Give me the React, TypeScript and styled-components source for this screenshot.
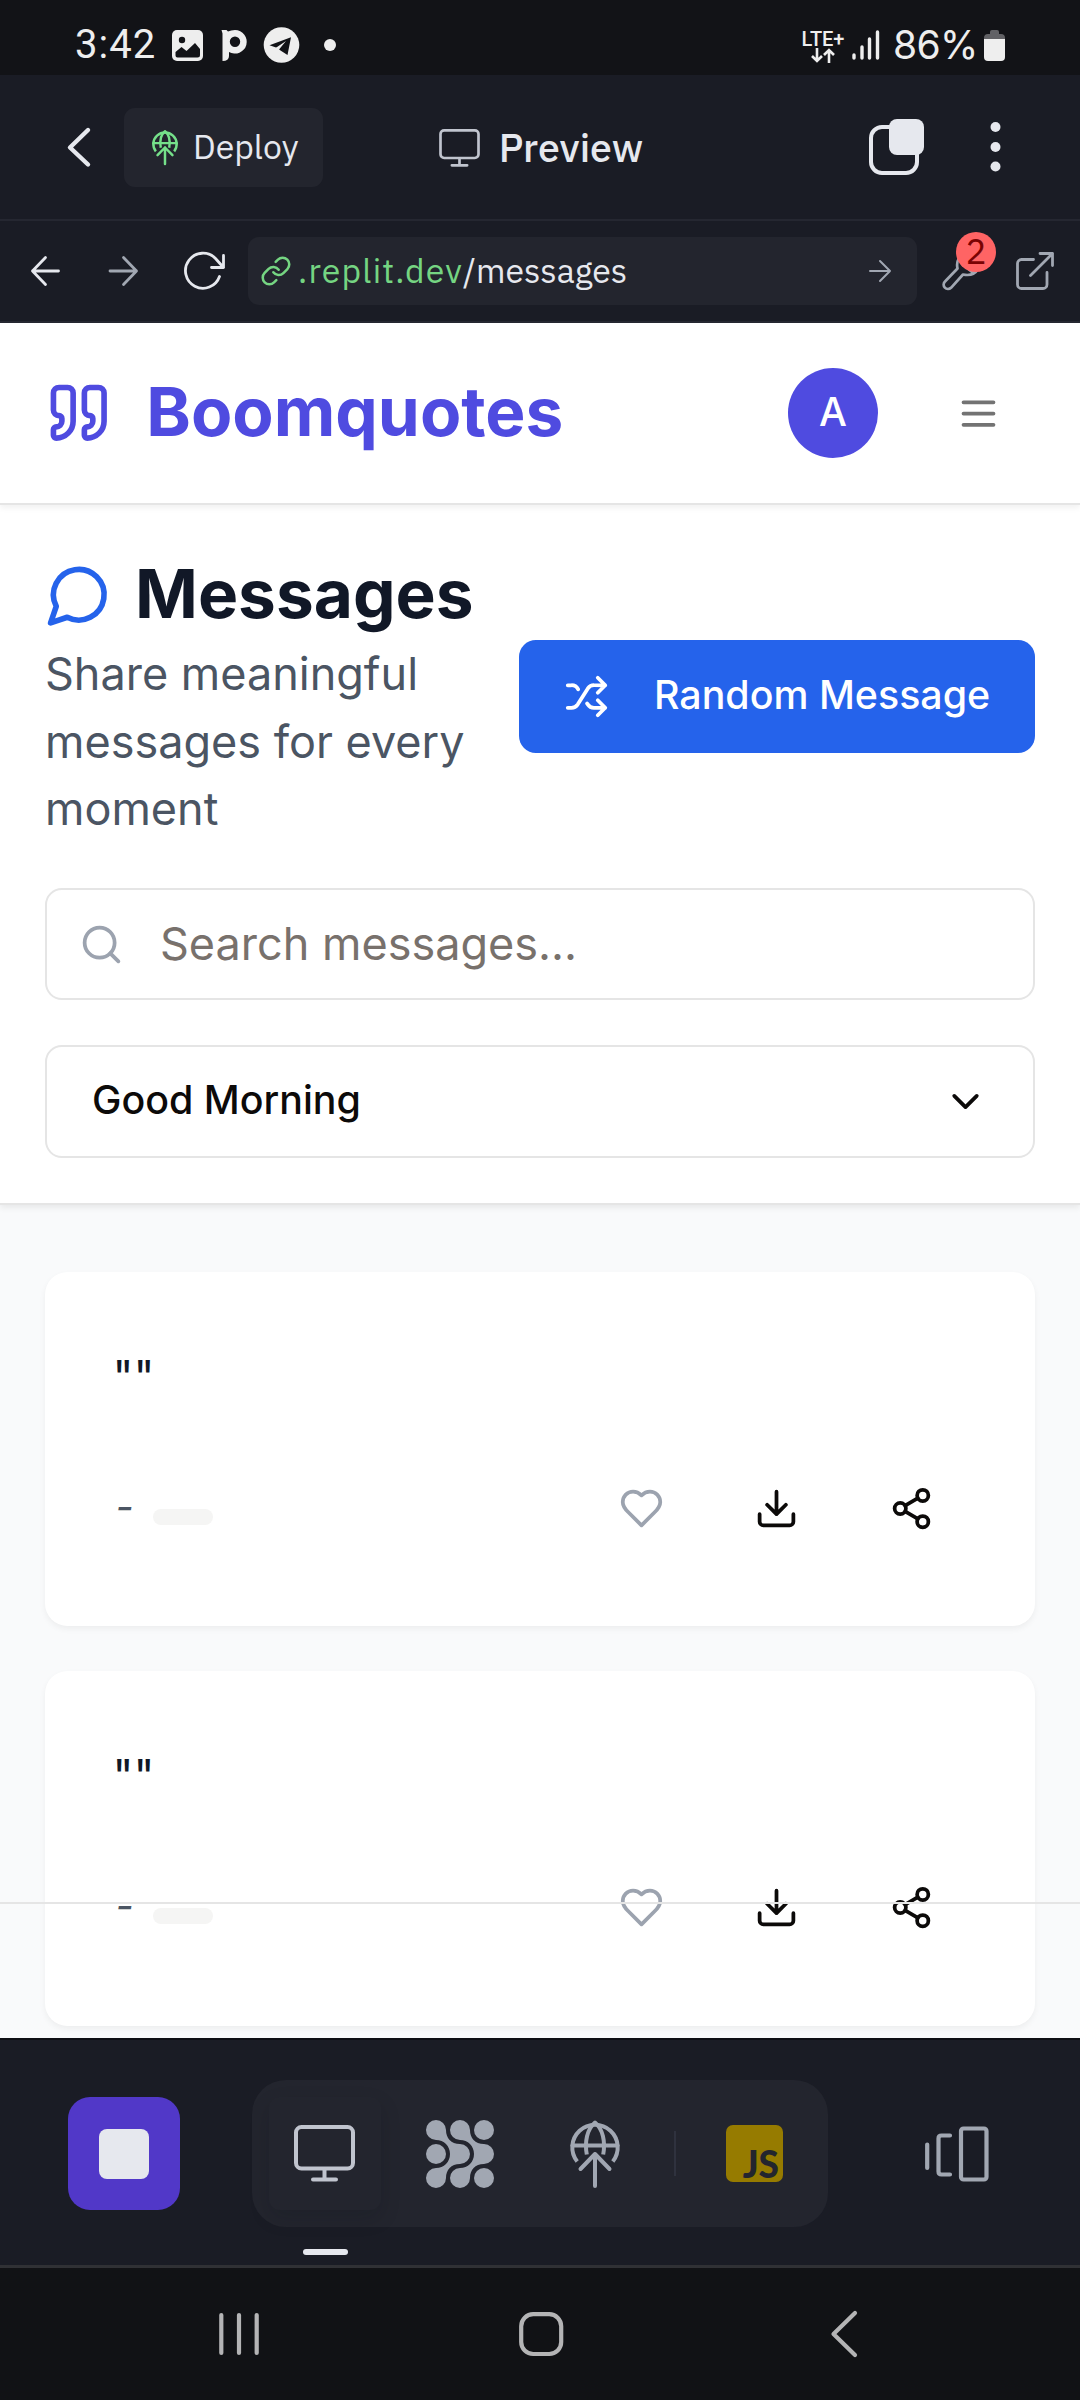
import React from "react";
import styled, { createGlobalStyle } from "styled-components";

const Global = createGlobalStyle`
  * { box-sizing: border-box; }
  html, body { margin: 0; padding: 0; }
  body { width: 1080px; height: 2400px; overflow: hidden; background: #121317; }
  button { border: 0; padding: 0; margin: 0; background: none; font: inherit; color: inherit; }
  svg { display: block; flex: none; overflow: visible; }
`;

const chromeFont = `"IBM Plex Sans", Roboto, sans-serif`;
const appFont = `Inter, sans-serif`;
const chromeBg = "#1a1c25";
const chromeRaised = "#23252e";

const Screen = styled.div`
  display: flex;
  flex-direction: column;
  width: 1080px;
  height: 2400px;
  overflow: hidden;
`;

/* ---------- Android status bar ---------- */
const StatusBar = styled.div`
  display: flex;
  align-items: center;
  justify-content: space-between;
  height: 75px;
  padding: 15px 75px 0 75px;
  background: #121317;
  color: #eeeeee;
  font: 400 40px/48px Roboto, sans-serif;
`;
const StatusGroup = styled.div`
  display: flex;
  align-items: center;
`;
const Clock = styled.span`
  width: 97px;
  letter-spacing: 1px;
`;
const Network = styled.div`
  display: flex;
  flex-direction: column;
  align-items: center;
  width: 40px;
  margin-right: 9px;
  padding-top: 2px;
  font: 500 20px/18px Roboto, sans-serif;
`;
const Percent = styled.span`
  width: 91px;
  margin-left: 13px;
  font: 400 39px/48px ${appFont};
  letter-spacing: -0.6px;
  white-space: nowrap;
`;

/* ---------- Workspace header ---------- */
const Header = styled.header`
  display: grid;
  grid-template-columns: 370px 1fr 370px;
  align-items: center;
  height: 146px;
  border-bottom: 2px solid #252731;
  background: ${chromeBg};
  color: #e6e8ee;
  font-family: ${chromeFont};
`;
const HeaderStart = styled.div`
  display: flex;
  align-items: center;
  padding-left: 67px;
  gap: 33px;
`;
const DeployButton = styled.button`
  display: flex;
  align-items: center;
  gap: 15px;
  width: 199px;
  height: 79px;
  padding-left: 28px;
  border-radius: 11px;
  background: ${chromeRaised};
  font: 400 33.75px/40px ${chromeFont};
`;
const DeployLabel = styled.span`
  padding-bottom: 2px;
`;
const HeaderTitle = styled.div`
  display: flex;
  align-items: center;
  justify-content: center;
  gap: 19px;
  padding: 2px 0 0 2px;
  font: 500 39.375px/46px ${chromeFont};
`;
const HeaderEnd = styled.div`
  display: flex;
  align-items: center;
  justify-content: flex-end;
  gap: 66px;
  padding-right: 79px;
`;

/* ---------- Address row ---------- */
const AddressRow = styled.div`
  display: flex;
  align-items: center;
  height: 102px;
  padding: 0 24px 0 30px;
  border-bottom: 2px solid #252731;
  background: ${chromeBg};
`;
const IconButton = styled.button<{ $w: number }>`
  display: flex;
  align-items: center;
  justify-content: flex-start;
  width: ${(p) => p.$w}px;
`;
const UrlField = styled.div`
  display: flex;
  align-items: center;
  width: 669px;
  height: 68px;
  padding: 0 26px 0 12px;
  border-radius: 11px;
  background: ${chromeRaised};
  color: #e6e8ee;
  font: 400 33.75px/42px ${chromeFont};
`;
const UrlText = styled.span`
  flex: 1;
  margin-left: 6px;
  padding-bottom: 3px;
`;
const UrlHost = styled.span`
  color: #75d582;
  letter-spacing: 1.2px;
`;
const WrenchButton = styled.button`
  position: relative;
  width: 47px;
  height: 68px;
  margin: 0 27px 0 25px;
  display: flex;
  align-items: center;
`;
const Badge = styled.span`
  position: absolute;
  left: 14px;
  top: -5px;
  width: 40px;
  height: 40px;
  border-radius: 50%;
  background: #ff6464;
  color: #7a0303;
  font: 400 35px/38px ${chromeFont};
  text-align: center;
`;

/* ---------- Web page ---------- */
const Page = styled.main`
  position: relative;
  height: 1715px;
  overflow: hidden;
  background: #f9fafb;
  font-family: ${appFont};
`;
const SiteHeader = styled.div`
  position: relative;
  display: flex;
  align-items: center;
  height: 182px;
  padding: 0 46px 0 45px;
  border-bottom: 2px solid #e5e5e5;
  background: #ffffff;
  box-shadow: 0 3px 6px rgba(0, 0, 0, 0.06);
  z-index: 1;
`;
const Brand = styled.span`
  flex: 1;
  margin-left: 33.75px;
  padding-bottom: 2px;
  color: #4f4be0;
  font-size: 67.5px;
  font-weight: 700;
  line-height: 90px;
`;
const Avatar = styled.div`
  display: flex;
  align-items: center;
  justify-content: center;
  width: 90px;
  height: 90px;
  margin-right: 44px;
  padding-bottom: 2px;
  border-radius: 50%;
  background: #4f4be0;
  color: #ffffff;
  font-size: 39.4px;
  font-weight: 500;
`;
const MenuButton = styled.button`
  display: flex;
  align-items: center;
  justify-content: center;
  width: 112px;
  height: 101px;
  color: #737373;
`;
const Intro = styled.section`
  height: 700px;
  padding: 45px 45px 0;
  border-bottom: 2px solid #e5e5e5;
  background: #ffffff;
  box-shadow: 0 3px 6px rgba(0, 0, 0, 0.07);
`;
const IntroTop = styled.div`
  display: flex;
  align-items: center;
  justify-content: space-between;
  height: 293px;
`;
const IntroText = styled.div`
  width: 430px;
`;
const Heading = styled.h1`
  display: flex;
  align-items: center;
  gap: 22.5px;
  height: 90px;
  margin: 0;
  padding-bottom: 2px;
  color: #111827;
  font-size: 67.5px;
  font-weight: 700;
  line-height: 88px;
`;
const Lead = styled.p`
  margin: 0;
  color: #4b5563;
  font-size: 45px;
  line-height: 67.5px;
`;
const RandomButton = styled.button`
  display: flex;
  align-items: center;
  gap: 45px;
  width: 516px;
  height: 112.5px;
  padding-left: 45px;
  border-radius: 16.9px;
  background: #2563eb;
  color: #ffffff;
  font: 500 39.375px/56px ${appFont};
  white-space: nowrap;
`;
const SearchField = styled.label`
  display: flex;
  align-items: center;
  gap: 36px;
  height: 112px;
  margin-top: 45px;
  padding-left: 32px;
  border: 2px solid #e5e5e5;
  border-radius: 16.9px;
  color: #9ca3af;
`;
const SearchInput = styled.input`
  flex: 1;
  min-width: 0;
  padding: 0 0 2px;
  border: 0;
  outline: 0;
  background: transparent;
  font: 400 45px/67px ${appFont};
  &::placeholder {
    color: #78716c;
    opacity: 1;
  }
`;
const Select = styled.button`
  display: flex;
  align-items: center;
  justify-content: space-between;
  width: 100%;
  height: 113px;
  margin-top: 45px;
  padding: 0 45px 0 45px;
  border: 2px solid #e5e5e5;
  border-radius: 16.9px;
  color: #0c0a09;
  font: 500 39.375px/56px ${appFont};
`;
const ButtonLabel = styled.span`
  padding-bottom: 3px;
`;
const CardList = styled.div`
  display: flex;
  flex-direction: column;
  gap: 45px;
  padding: 67px 45px 0;
`;
const Card = styled.article`
  height: 354.4px;
  padding: 67.5px;
  border-radius: 22.5px;
  background: #ffffff;
  box-shadow: 0 3px 6px rgba(0, 0, 0, 0.05);
`;
const QuoteText = styled.p`
  margin: 0 0 45px;
  color: #111827;
  font-size: 45px;
  font-weight: 400;
  line-height: 73px;
`;
const CardFooter = styled.div`
  display: flex;
  align-items: center;
  justify-content: space-between;
  height: 101px;
`;
const Author = styled.div`
  display: flex;
  align-items: center;
  color: #4b5563;
  font-size: 39.375px;
  font-style: italic;
  line-height: 56px;
`;
const Dash = styled.span`
  width: 18px;
  padding: 0 0 2px 3px;
`;
const Tag = styled.span`
  width: 60px;
  height: 16px;
  margin: 17px 0 0 22px;
  border-radius: 8px;
  background: #f5f5f4;
`;
const Actions = styled.div`
  display: flex;
  gap: 22.5px;
`;
const Action = styled.button<{ $muted?: boolean }>`
  display: flex;
  align-items: center;
  justify-content: center;
  width: 112.5px;
  height: 101px;
  color: ${(p) => (p.$muted ? "#9ca3af" : "#0c0a09")};
`;
const FooterEdge = styled.div`
  position: absolute;
  left: 0;
  right: 0;
  bottom: 134px;
  height: 2px;
  background: #e5e5e5;
`;

/* ---------- Workspace dock ---------- */
const Dock = styled.div`
  display: flex;
  align-items: flex-start;
  height: 227px;
  padding: 40px 0 0 68px;
  border-top: 2px solid #0e0f14;
  background: ${chromeBg};
`;
const StopButton = styled.button`
  display: flex;
  align-items: center;
  justify-content: center;
  width: 112px;
  height: 113px;
  margin: 17px 72px 0 0;
  border-radius: 22px;
  background: #5138c8;
`;
const StopSquare = styled.span`
  width: 50px;
  height: 50px;
  border-radius: 8px;
  background: #e6e8ee;
`;
const Tools = styled.div`
  display: flex;
  align-items: center;
  width: 576px;
  height: 147px;
  padding-left: 17px;
  border-radius: 34px;
  background: ${chromeRaised};
`;
const Tool = styled.button<{ $active?: boolean }>`
  position: relative;
  display: flex;
  align-items: center;
  justify-content: center;
  width: 112px;
  height: 113px;
  margin-right: 23px;
  padding-right: ${(p) => (p.$active ? 2 : 0)}px;
  border-radius: 11px;
  box-shadow: ${(p) => (p.$active ? "0 8px 20px rgba(10, 12, 20, 0.15)" : "none")};
`;
const ActiveMark = styled.span`
  position: absolute;
  left: 34px;
  top: 152px;
  width: 45px;
  height: 6px;
  border-radius: 3px;
  background: #e6e8ee;
`;
const ToolDivider = styled.span`
  width: 2px;
  height: 45px;
  background: #2f323e;
`;
const JsFile = styled.span`
  display: flex;
  align-items: flex-end;
  justify-content: flex-end;
  width: 57px;
  height: 57px;
  margin-left: 50px;
  padding: 0 4px 2px 0;
  border-radius: 7px;
  background: #967b00;
  color: ${chromeRaised};
  font: 900 37px/33px Lato, sans-serif;
`;
const PanesButton = styled.button`
  display: flex;
  margin: 46px 0 0 97px;
`;

/* ---------- Android navigation ---------- */
const NavBar = styled.nav`
  display: flex;
  align-items: center;
  height: 135px;
  padding: 0 0 1px 218px;
  border-top: 3px solid #303135;
  background: #111215;
`;

type IconProps = { size?: number; children: React.ReactNode; width?: number };
const Line = ({ size = 45, width = 2, children }: IconProps) => (
  <svg width={size} height={size} viewBox="0 0 24 24" fill="none" stroke="currentColor" strokeWidth={width} strokeLinecap="round" strokeLinejoin="round">
    {children}
  </svg>
);

const Monitor = ({ w, h, s }: { w: number; h: number; s: number }) => (
  <svg width={w} height={h} viewBox="0 0 61 57" fill="none" stroke="#c0c4ce" strokeWidth={s} strokeLinecap="round">
    <rect x="2" y="2" width="57" height="41.5" rx="5.5" />
    <path d="M30.5 44v10M19 54.5h23" />
  </svg>
);

const GlobeUp = ({ w, h, color, s = 4 }: { w: number; h: number; color: string; s?: number }) => (
  <svg width={w} height={h} viewBox="0 0 50 68" fill="none" stroke={color} strokeWidth={s} strokeLinecap="round" strokeLinejoin="round">
    <path d="M7.2 41.5A22.7 22.7 0 1 1 42.8 41.5" strokeLinecap="butt" />
    <path d="M2.5 25.5h45" />
    <path d="M16.8 34.5C14.5 22 17 9 25 2.5C33 9 35.5 22 33.2 34.5" strokeLinecap="butt" />
    <path d="M25 66V34M10.5 49L25 34L39.5 49" />
  </svg>
);

const Cells = () => (
  <svg width="68" height="68" viewBox="0 0 68 68" fill="#a1a7b2">
    <circle cx="58" cy="10" r="10" />
    <circle cx="10" cy="34" r="10" />
    <circle cx="58" cy="58" r="10" />
    <path d="M10 0A10 10 0 0 1 20 10C20 18 25 24 34 24A10 10 0 0 1 34 44C25 44 20 50 20 58A10 10 0 1 1 10 48C18 48 24 42 24 34C24 26 18 20 10 20A10 10 0 0 1 10 0Z" />
    <path d="M34 0A10 10 0 0 1 44 10C44 18 49 24 58 24A10 10 0 0 1 58 44C49 44 44 50 44 58A10 10 0 1 1 34 48C42 48 48 42 48 34C48 26 42 20 34 20A10 10 0 0 1 34 0Z" />
  </svg>
);

const MessageCard = () => (
  <Card>
    <QuoteText>""</QuoteText>
    <CardFooter>
      <Author>
        <Dash>-</Dash>
        <Tag />
      </Author>
      <Actions>
        <Action $muted aria-label="Like">
          <Line>
            <path d="M19 14c1.49-1.46 3-3.21 3-5.5A5.5 5.5 0 0 0 16.5 3c-1.76 0-3 .5-4.5 2-1.5-1.5-2.74-2-4.5-2A5.5 5.5 0 0 0 2 8.5c0 2.3 1.5 4.05 3 5.5l7 7Z" />
          </Line>
        </Action>
        <Action aria-label="Download">
          <Line>
            <path d="M21 15v4a2 2 0 0 1-2 2H5a2 2 0 0 1-2-2v-4M7 10l5 5 5-5M12 15V3" />
          </Line>
        </Action>
        <Action aria-label="Share">
          <Line>
            <circle cx="18" cy="5" r="3" />
            <circle cx="6" cy="12" r="3" />
            <circle cx="18" cy="19" r="3" />
            <path d="M8.59 13.51l6.83 3.98M15.41 6.51l-6.82 3.98" />
          </Line>
        </Action>
      </Actions>
    </CardFooter>
  </Card>
);

export default function App() {
  return (
    <Screen>
      <Global />
      <StatusBar>
        <StatusGroup>
          <Clock>3:42</Clock>
          <svg width="160" height="36" viewBox="172 27 160 36" fill="#eeeeee">
            <rect x="172" y="30" width="31" height="31" rx="5" />
            <circle cx="182" cy="40" r="3.2" fill="#121317" />
            <path d="M175.5 52l6-5 5 4 8.5-8 5 6v6a2.5 2.5 0 0 1-2.5 2.5h-20a2 2 0 0 1-2-2z" fill="#121317" />
            <path fillRule="evenodd" d="M221.5 30h5l1.5 1.5q3-1.5 7-1.5a11.8 11.8 0 1 1-6 22v4q0 5-6.5 5V33.5zM235 36.5a5.2 5.2 0 1 0 0 10.4a5.2 5.2 0 0 0 0-10.4z" />
            <circle cx="281.5" cy="45" r="17.8" />
            <path d="M269.5 45.3L291 37.3L287.5 55L280.5 50.5L278 48.5L276 47.5z" fill="#121317" />
            <path d="M275.5 48L286 41L279 49.5L276.5 53z" fill="#eeeeee" />
            <circle cx="330" cy="45" r="6" />
          </svg>
        </StatusGroup>
        <StatusGroup>
          <Network>
            LTE+
            <svg width="24" height="15" viewBox="0 0 24 15" fill="none" stroke="#eeeeee" strokeWidth="2.6">
              <path d="M6 0v13M1 8l5 5 5-5M18 15V2M13 7l5-5 5 5" />
            </svg>
          </Network>
          <svg width="28" height="30" viewBox="0 0 28 30" stroke="#eeeeee" strokeWidth="3.4" strokeLinecap="round">
            <path d="M2 25v3M10 17v11M17.5 9v19M25.5 2v26" />
          </svg>
          <Percent>86%</Percent>
          <svg width="21" height="32" viewBox="0 0 21 32">
            <path d="M6 3q0-2 2-2h5q2 0 2 2v2h2q4 0 4 4v3H0V9q0-4 4-4h2z" fill="#616165" />
            <path d="M0 10h21v18q0 4-4 4H4q-4 0-4-4z" fill="#eeeeee" />
          </svg>
        </StatusGroup>
      </StatusBar>

      <Header>
        <HeaderStart>
          <svg width="24" height="40" viewBox="0 0 24 40" fill="none" stroke="#e6e8ee" strokeWidth="4.4" strokeLinecap="round" strokeLinejoin="round">
            <path d="M21 3L3 20.5L21 37.5" />
          </svg>
          <DeployButton>
            <GlobeUp w={26} h={35} color="#75e08a" s={4.8} />
            <DeployLabel>Deploy</DeployLabel>
          </DeployButton>
        </HeaderStart>
        <HeaderTitle>
          <Monitor w={41} h={38} s={4} />
          Preview
        </HeaderTitle>
        <HeaderEnd>
          <svg width="55" height="56" viewBox="0 0 55 56">
            <rect x="2" y="8" width="46" height="46" rx="11" fill="none" stroke="#e6e8ee" strokeWidth="4" />
            <rect x="20" y="0" width="35" height="36" rx="8" fill="#e6e8ee" />
          </svg>
          <svg width="11" height="50" viewBox="0 0 11 50" fill="#e6e8ee">
            <circle cx="5.5" cy="5" r="5" />
            <circle cx="5.5" cy="25" r="5" />
            <circle cx="5.5" cy="44.5" r="5" />
          </svg>
        </HeaderEnd>
      </Header>

      <AddressRow>
        <IconButton $w={78} aria-label="Back">
          <svg width="30" height="30" viewBox="0 0 30 30" fill="none" stroke="#e6e8ee" strokeWidth="2.8" strokeLinecap="round" strokeLinejoin="round">
            <path d="M28.5 15H2.5M15.5 1.5L2.5 15L15.5 28.5" />
          </svg>
        </IconButton>
        <IconButton $w={76} aria-label="Forward">
          <svg width="30" height="30" viewBox="0 0 30 30" fill="none" stroke="#a1a7b2" strokeWidth="2.8" strokeLinecap="round" strokeLinejoin="round">
            <path d="M2 15H28.5M15.5 1.5L28.5 15L15.5 28.5" />
          </svg>
        </IconButton>
        <IconButton $w={64} aria-label="Reload">
          <svg width="41" height="38" viewBox="0 0 41 38" fill="none" stroke="#e6e8ee" strokeWidth="2.8" strokeLinecap="round" strokeLinejoin="round">
            <path d="M35.5 24.5A17.5 17.5 0 1 1 31.5 6.5L39.5 15.5M39.5 3.5V15.5H27.5" />
          </svg>
        </IconButton>
        <UrlField>
          <svg width="32" height="32" viewBox="0 0 24 24" fill="none" stroke="#75d582" strokeWidth="1.9" strokeLinecap="round">
            <path d="M10 13a5 5 0 0 0 7.54.54l3-3a5 5 0 0 0-7.07-7.07l-1.72 1.71" />
            <path d="M14 11a5 5 0 0 0-7.54-.54l-3 3a5 5 0 0 0 7.07 7.07l1.71-1.71" />
          </svg>
          <UrlText>
            <UrlHost>.replit.dev</UrlHost>/messages
          </UrlText>
          <svg width="22" height="22" viewBox="0 0 22 22" fill="none" stroke="#a1a7b2" strokeWidth="2" strokeLinecap="round" strokeLinejoin="round">
            <path d="M1 11H21M11 1L21 11L11 21" />
          </svg>
        </UrlField>
        <WrenchButton aria-label="Developer tools">
          <svg width="38" height="38" viewBox="0 0 38 38" fill="none" stroke="#a1a7b2" strokeWidth="2.7" strokeLinejoin="round">
            <path d="M24 2C17 3 14 9 15.5 16.5L3 29.5A4.3 4.3 0 0 0 9 35.8L21 22.5C28 24 33 22 36 17L30 20L20 12Z" />
          </svg>
          <Badge>2</Badge>
        </WrenchButton>
        <svg width="38" height="38" viewBox="0 0 38 38" fill="none" stroke="#a1a7b2" strokeWidth="2.8" strokeLinecap="round" strokeLinejoin="round">
          <path d="M17.5 7.5H5.5A4 4 0 0 0 1.5 11.5V32.5A4 4 0 0 0 5.5 36.5H27A4 4 0 0 0 31 32.5V20.5M24 1.5H36.5V13.5M36.5 1.5L14.5 23.5" />
        </svg>
      </AddressRow>

      <Page>
        <SiteHeader>
          <svg width="67.5" height="67.5" viewBox="0 0 24 24" fill="none" stroke="#4f4be0" strokeWidth="2" strokeLinecap="round" strokeLinejoin="round">
            <path d="M16 3a2 2 0 0 0-2 2v6a2 2 0 0 0 2 2 1 1 0 0 1 1 1v1a2 2 0 0 1-2 2 1 1 0 0 0-1 1v2a1 1 0 0 0 1 1 6 6 0 0 0 6-6V5a2 2 0 0 0-2-2z" />
            <path d="M5 3a2 2 0 0 0-2 2v6a2 2 0 0 0 2 2 1 1 0 0 1 1 1v1a2 2 0 0 1-2 2 1 1 0 0 0-1 1v2a1 1 0 0 0 1 1 6 6 0 0 0 6-6V5a2 2 0 0 0-2-2z" />
          </svg>
          <Brand>Boomquotes</Brand>
          <Avatar>A</Avatar>
          <MenuButton aria-label="Menu">
            <Line>
              <path d="M4 6h16M4 12h16M4 18h16" />
            </Line>
          </MenuButton>
        </SiteHeader>

        <Intro>
          <IntroTop>
            <IntroText>
              <Heading>
                <svg width="67.5" height="67.5" viewBox="0 0 24 24" fill="none" stroke="#2563eb" strokeWidth="2" strokeLinecap="round" strokeLinejoin="round">
                  <path d="M7.9 20A9 9 0 1 0 4 16.1L2 22Z" />
                </svg>
                Messages
              </Heading>
              <Lead>Share meaningful messages for every moment</Lead>
            </IntroText>
            <RandomButton>
              <Line>
                <path d="m18 14 4 4-4 4M18 2l4 4-4 4M2 18h1.973a4 4 0 0 0 3.3-1.7l5.454-8.6a4 4 0 0 1 3.3-1.7H22M2 6h1.972a4 4 0 0 1 3.6 2.2M22 18h-6.041a4 4 0 0 1-3.3-1.8l-.359-.45" />
              </Line>
              <ButtonLabel>Random Message</ButtonLabel>
            </RandomButton>
          </IntroTop>
          <SearchField>
            <Line>
              <circle cx="11" cy="11" r="8" />
              <path d="m21 21-4.3-4.3" />
            </Line>
            <SearchInput placeholder="Search messages..." />
          </SearchField>
          <Select>
            <ButtonLabel>Good Morning</ButtonLabel>
            <Line>
              <path d="m6 9 6 6 6-6" />
            </Line>
          </Select>
        </Intro>

        <CardList>
          <MessageCard />
          <MessageCard />
        </CardList>
        <FooterEdge />
      </Page>

      <Dock>
        <StopButton aria-label="Stop">
          <StopSquare />
        </StopButton>
        <Tools>
          <Tool $active aria-label="Preview">
            <Monitor w={61} h={57} s={4} />
            <ActiveMark />
          </Tool>
          <Tool aria-label="Agent">
            <Cells />
          </Tool>
          <Tool aria-label="Deployments">
            <GlobeUp w={50} h={68} color="#a1a7b2" />
          </Tool>
          <ToolDivider />
          <JsFile>JS</JsFile>
        </Tools>
        <PanesButton aria-label="Panes">
          <svg width="64" height="56" viewBox="0 0 64 56" fill="none" stroke="#a1a7b2" strokeWidth="4.2" strokeLinecap="round" strokeLinejoin="round">
            <path d="M2.2 18.5V42M25 9.5H16.5Q13.5 9.5 13.5 12.5V45.5Q13.5 48.5 16.5 48.5H25" />
            <rect x="36" y="2.5" width="25.5" height="51" rx="2.5" />
          </svg>
        </PanesButton>
      </Dock>

      <NavBar>
        <svg width="640" height="48" viewBox="218 2310 640 48" fill="none" stroke="#b4b4b5" strokeWidth="4.2" strokeLinecap="round" strokeLinejoin="round">
          <path d="M221.3 2315V2353M239 2315V2353M256.7 2315V2353" />
          <rect x="521.2" y="2314.2" width="40" height="39.8" rx="12" />
          <path d="M855 2313L833.5 2334L855 2355" />
        </svg>
      </NavBar>
    </Screen>
  );
}
